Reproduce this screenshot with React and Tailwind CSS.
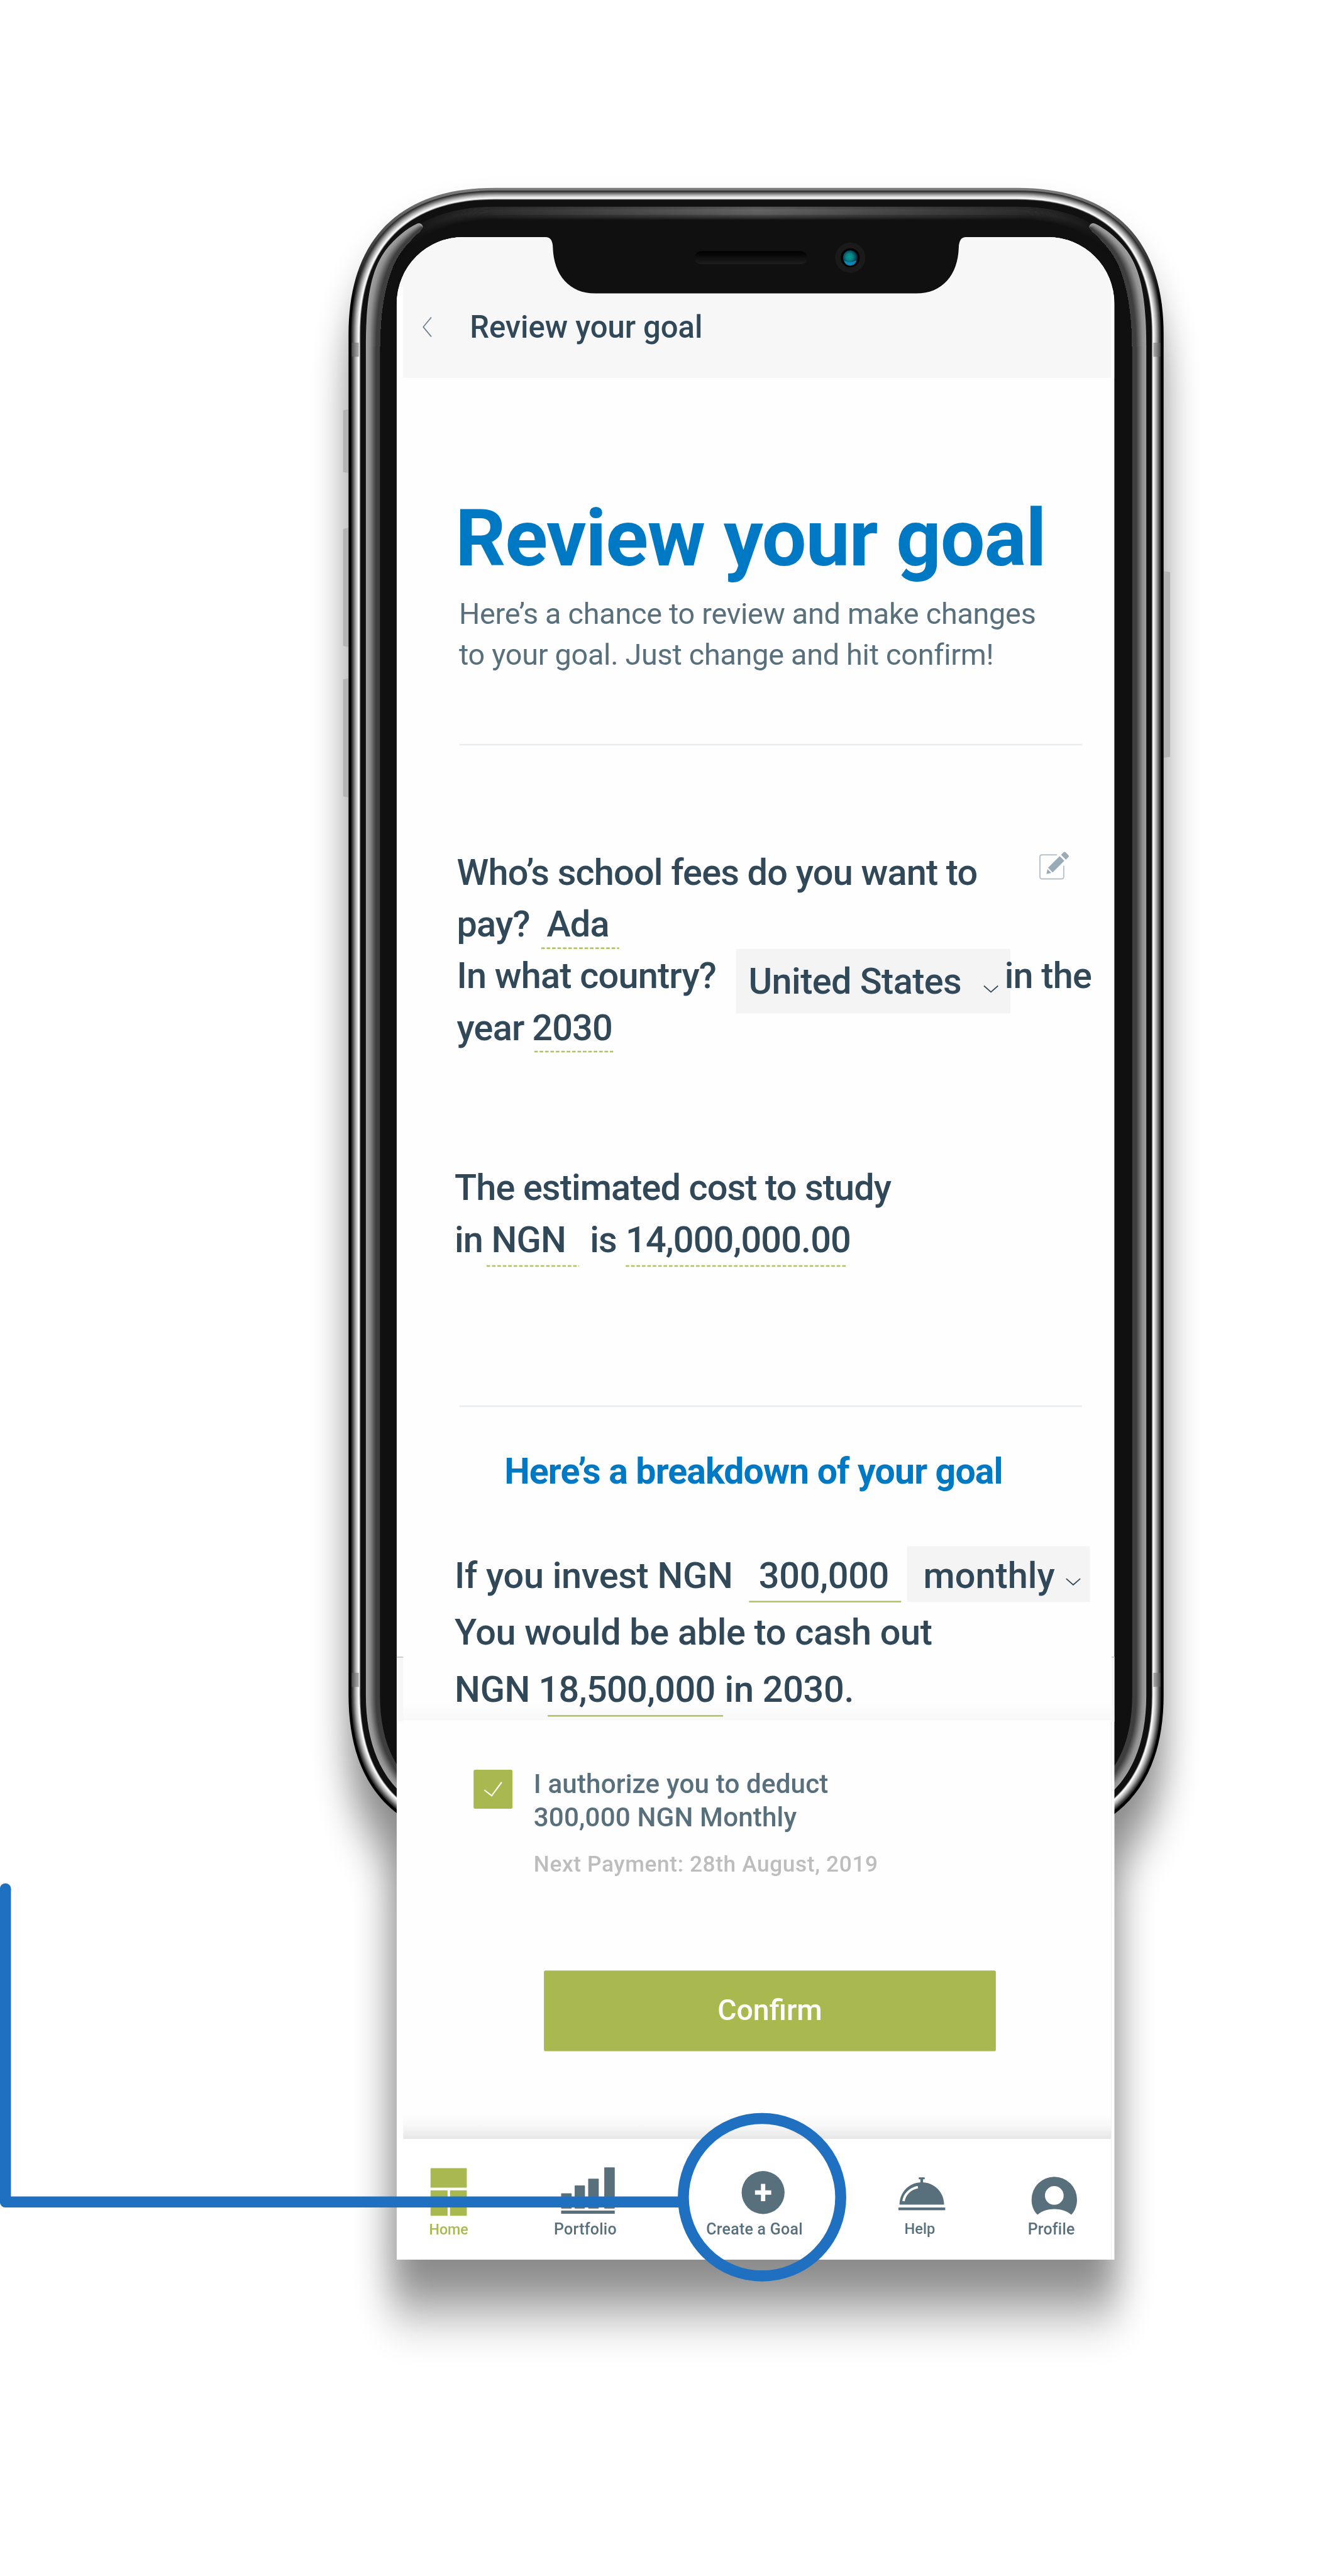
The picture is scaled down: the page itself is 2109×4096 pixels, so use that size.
import React from "react";

const BODY = { left: 644, right: 2150, top: 347, bottom: 3401, corner: 270 };

// Rounded rectangle with continuous corners, shrunk on every side by `inset`.
function bodyPath(inset) {
  const l = BODY.left + inset;
  const r = BODY.right - inset;
  const t = BODY.top + inset;
  const b = BODY.bottom - inset;
  const c = BODY.corner - inset;
  const k = c * 0.35;
  return `M${l + c} ${t}H${r - c}C${r - k} ${t} ${r} ${t + k} ${r} ${t + c}V${b - c}C${r} ${b - k} ${r - k} ${b} ${r - c} ${b}H${l + c}C${l + k} ${b} ${l} ${b - k} ${l} ${b - c}V${t + c}C${l} ${t + k} ${l + k} ${t} ${l + c} ${t}Z`;
}

const gray = (v) => `rgb(${v},${v},${v})`;

const METAL = [
  [5, 45], [6, 55], [7, 70], [8, 88], [9, 106], [10, 124], [11, 142], [12, 160], [13, 176],
  [14, 192], [15, 206], [16, 220], [17, 234], [18, 246], [19, 255], [20, 200], [21, 90], [22, 16],
];

const SIDE_GLOW = Array.from({ length: 26 }, (_, i) => {
  const t = i / 25;
  const v = t < 0.25 ? 160 - t * 60 : t < 0.72 ? 145 - ((t - 0.25) / 0.47) * 82 : 63;
  return [32 + i, Math.round(v)];
});

const TOP_GLOW = Array.from({ length: 24 }, (_, i) => {
  const t = i / 23;
  return [35 + i, t < 0.4 ? 0.8 + t * 0.5 : Math.max(0.1, 1 - ((t - 0.4) / 0.6) * 0.9)];
});

const GLOW_OUTER = [676, 640, 676, 555, 685, 500, 712, 463, 730, 439, 752, 422, 771, 413, 776, 411, 781, 414, 781, 420];
const GLOW_INNER = [702, 640, 702, 590, 708, 535, 726, 492, 738, 464, 756, 446, 776, 427, 778, 424, 781, 422, 781, 420];

function glowTip(t) {
  const p = GLOW_OUTER.map((v, i) => v + (GLOW_INNER[i] - v) * t);
  const q = GLOW_INNER;
  return `M${p[0]} ${p[1]}C${p.slice(2, 8).join(" ")}C${p.slice(8, 14).join(" ")}C${p.slice(14, 20).join(" ")}C${q[16]} ${q[17]} ${q[14]} ${q[15]} ${q[12]} ${q[13]}C${q[10]} ${q[11]} ${q[8]} ${q[9]} ${q[6]} ${q[7]}C${q[4]} ${q[5]} ${q[2]} ${q[3]} ${q[0]} ${q[1]}Z`;
}

function GlowTips() {
  return SIDE_GLOW.map(([inset, v], i) => (
    <path key={inset} d={glowTip(i / 25)} fill={gray(v)} />
  ));
}

function Device() {
  return (
    <svg className="absolute inset-0" width="2450" height="4758" viewBox="0 0 2450 4758">
      <defs>
        <filter id="shadow" x="-20%" y="-10%" width="140%" height="120%">
          <feGaussianBlur stdDeviation="34 52" />
        </filter>
        <linearGradient id="rim" gradientUnits="userSpaceOnUse" x1="0" y1="347" x2="0" y2="560">
          <stop offset="0" stopColor="#7c7c7c" />
          <stop offset="0.35" stopColor="#555" />
          <stop offset="1" stopColor="#000" />
        </linearGradient>
        <linearGradient id="sheen" gradientUnits="userSpaceOnUse" x1="740" y1="0" x2="2054" y2="0">
          <stop offset="0" stopColor="#101010" />
          <stop offset="0.08" stopColor="#2c2c2c" />
          <stop offset="0.5" stopColor="#7c7c7c" />
          <stop offset="0.92" stopColor="#2c2c2c" />
          <stop offset="1" stopColor="#101010" />
        </linearGradient>
        <linearGradient id="speaker" x1="0" y1="0" x2="0" y2="1">
          <stop offset="0" stopColor="#000" />
          <stop offset="1" stopColor="#1e1e1e" />
        </linearGradient>
        <radialGradient id="lens" cx="0.45" cy="0.45" r="0.55">
          <stop offset="0" stopColor="#0b9c8c" />
          <stop offset="0.45" stopColor="#0a7f85" />
          <stop offset="1" stopColor="#04203c" />
        </radialGradient>
        <clipPath id="topHalf"><rect x="700" y="347" width="1394" height="190" /></clipPath>
        <clipPath id="lowerBody"><rect x="600" y="639.5" width="1600" height="2900" /></clipPath>
      </defs>

      <g filter="url(#shadow)" opacity="0.47">
        <path d={bodyPath(0)} transform="translate(0 88)" />
        <rect x="722" y="700" width="1343" height="3562" />
      </g>

      <g fill="#b3b3b3">
        <path d="M644 756L634 758V872L644 874Z" />
        <path d="M644 975L634 977V1193L644 1195Z" />
        <path d="M644 1253L634 1255V1471L644 1473Z" />
        <path d="M2150 1055L2162 1057V1398L2150 1400Z" />
      </g>

      <path d={bodyPath(0)} fill="url(#rim)" />
      {METAL.map(([inset, v]) => (
        <path key={inset} d={bodyPath(inset)} fill={gray(v)} />
      ))}
      <g fill="#6b6b6b" fillOpacity="0.55">
        <rect x="650" y="633" width="13" height="26" />
        <rect x="2131" y="633" width="13" height="26" />
        <rect x="650" y="3090" width="13" height="26" />
        <rect x="2131" y="3090" width="13" height="26" />
      </g>

      <g clipPath="url(#topHalf)">
        {TOP_GLOW.map(([inset, o]) => (
          <g key={inset}>
            <path d={bodyPath(inset)} fill="#101010" />
            <path d={bodyPath(inset)} fill="url(#sheen)" fillOpacity={o} />
          </g>
        ))}
        <path d={bodyPath(59)} fill="#101010" />
      </g>
      <g clipPath="url(#lowerBody)">
        {SIDE_GLOW.map(([inset, v]) => (
          <path key={inset} d={bodyPath(inset)} fill={gray(v)} />
        ))}
        <path d={bodyPath(58)} fill="#101010" />
      </g>
      <GlowTips />
      <g transform="translate(2794 0) scale(-1 1)">
        <GlowTips />
      </g>
      <g fill="#101010">
        <rect x="703" y="630" width="36" height="20" />
        <rect x="2055" y="630" width="36" height="20" />
      </g>
    </svg>
  );
}

function Notch() {
  return (
    <svg className="absolute -top-px left-[262px]" width="802" height="106" viewBox="995 437 802 106">
      <path
        fill="#101010"
        d="M1003 436.500V438H1008Q1021 438 1021.500 457C1023 508 1052 542 1100 542H1693C1741 542 1770 508 1771.500 457Q1772 438 1785 438H1790V436.500Z"
      />
      <rect x="1283" y="464" width="209" height="24" rx="12" fill="url(#speaker)" />
      <circle cx="1571" cy="476" r="28" fill="#1a1a1a" />
      <circle cx="1571" cy="476" r="17.500" fill="#000" />
      <circle cx="1571" cy="476" r="13.500" fill="url(#lens)" />
      <path d="M1559.500 481Q1570.500 487 1582.500 481C1580.500 494 1561.500 494 1559.500 481Z" fill="#0a86b4" />
    </svg>
  );
}

function Chevron() {
  return (
    <svg className="block" width="28" height="14" viewBox="0 0 28 14" fill="none" stroke="#304857" strokeWidth="2">
      <path d="M1 1L14 12.500L27 1" />
    </svg>
  );
}

function Field({ className, children }) {
  return (
    <span
      className={`block shrink-0 bg-[linear-gradient(90deg,#b4c266_70%,transparent_70%)] bg-[length:10px_3px] bg-left-bottom bg-repeat-x ${className}`}
    >
      {children}
    </span>
  );
}

function NavItem({ label, className, labelClass, iconClass = "", children }) {
  return (
    <div className={`flex shrink-0 flex-col items-center ${className}`}>
      <svg className={`block ${iconClass}`} width="100" height="94" viewBox="0 0 100 94" fill="currentColor">
        {children}
      </svg>
      <span className={`mt-[5px] whitespace-nowrap font-medium leading-[36px] ${labelClass}`}>{label}</span>
    </div>
  );
}

function BottomNav() {
  return (
    <nav className="flex h-[223px] bg-white pt-[49px] text-[#586f7c]">
      <NavItem label="Home" className="w-[192px] text-[#aab94f]" labelClass="text-[27px] pt-[2px]">
        <rect x="16.500" y="5" width="67" height="36" rx="1" />
        <rect x="16.500" y="46" width="31.500" height="47" rx="1" />
        <rect x="52.500" y="46" width="31" height="47" rx="1" />
      </NavItem>
      <NavItem label="Portfolio" className="w-[313px]" labelClass="text-[29px] tracking-[0.3px]" iconClass="ml-[9px]">
        <rect x="0.800" y="51.500" width="19.500" height="28" rx="1" />
        <rect x="25.800" y="37" width="19" height="42.500" rx="1" />
        <rect x="50.800" y="24.500" width="19.500" height="55" rx="1" />
        <rect x="80.500" y="3.500" width="19.500" height="76" rx="1" />
        <rect x="0.800" y="83.300" width="99.200" height="6" />
      </NavItem>
      <NavItem label="Create a Goal" className="w-[312px]" labelClass="text-[29px] tracking-[0.3px]" iconClass="ml-[32px]">
        <circle cx="50" cy="50" r="39.700" />
        <path d="M46 34h8v12h11v8h-11v12h-8v-12h-11v-8h11z" fill="#fff" />
      </NavItem>
      <NavItem label="Help" className="w-[299px]" labelClass="text-[27.5px]" iconClass="ml-[6px]">
        <rect x="44.600" y="22" width="11" height="3.500" />
        <rect x="47.600" y="25" width="5" height="8" />
        <path d="M9 72.300C9 49 27 31 50 31S91.300 49 91.300 72.300Z" />
        <rect x="7" y="77.700" width="86.500" height="5" />
        <path d="M16.500 66C18 54 28 43 43 40" fill="none" stroke="#fff" strokeWidth="4.500" />
      </NavItem>
      <NavItem label="Profile" className="w-[187px]" labelClass="text-[29px] tracking-[0.2px]" iconClass="ml-[10px]">
        <path
          fillRule="evenodd"
          d="M19 91C11 83 8 73 8 63A42 42 0 0 1 92 63C92 73 89 83 81.500 91C65 77 35 77 19 91ZM50 38.200A17.300 17.300 0 1 0 50 72.800A17.300 17.300 0 1 0 50 38.200Z"
        />
      </NavItem>
    </nav>
  );
}

function Screen() {
  return (
    <section className="relative ml-[733px] h-[3736px] w-[1326px]">
      <div className="flex h-[3736px] w-[1326px] flex-col overflow-hidden rounded-t-[123px] bg-[#fefefe] text-[#304857]">
        <header className="h-[260px] shrink-0 bg-[linear-gradient(#f7f7f7_92px,white_92px)] pl-[12px] pr-[6px]">
          <div className="flex h-[260px] bg-[#f7f7f7] pl-[36px] pt-[137px]">
            <svg className="mt-[10px] block" width="17" height="38" viewBox="0 0 17 38" fill="none" stroke="#6d828f" strokeWidth="2">
              <path d="M16 1L1 19L16 37" />
            </svg>
            <span className="ml-[70px] text-[57px] font-medium leading-[60px] tracking-[-0.1px]">Review your goal</span>
          </div>
        </header>

        <h1 className="mt-[224px] whitespace-nowrap pl-[108px] text-[146px] font-bold leading-[146px] tracking-[-1.5px] text-[#0079c4]">
          Review your goal
        </h1>
        <p className="mt-[28px] whitespace-nowrap pl-[115px] text-[54.4px] leading-[76px] tracking-[-0.35px] text-[#586f7c]">
          Here’s a chance to review and make changes
          <br />
          to your goal. Just change and hit confirm!
        </p>
        <hr className="ml-[116px] mt-[126px] h-[3px] w-[1150px] shrink-0 border-0 bg-[#e8edf1]" />

        <div className="mt-[185px] pl-[111px] text-[67px] font-medium leading-[99px] tracking-[-0.95px]">
          <div className="flex h-[95.5px] whitespace-nowrap">
            <span className="w-[1076px]">Who’s school fees do you want to</span>
            <svg className="mt-[9px] block" width="58" height="56" viewBox="0 0 58 56">
              <path d="M33 8H5.500Q1.500 8 1.500 12V48Q1.500 52.500 5.500 52.500H41.500Q45.500 52.500 45.500 48V28" fill="none" stroke="#b4c3cc" strokeWidth="2.200" />
              <g fill="#98abb6">
                <path d="M38 10.500L46.500 19L25 40.500L16.500 32Z" />
                <path d="M40.500 8L45 3.500Q47 1.500 49 3.500L54 8.500Q56 10.500 54 12.500L49.500 17Z" />
                <path d="M15.500 34.500L22.500 41.500L13.500 43.500Z" />
              </g>
            </svg>
          </div>
          <div className="flex h-[95.5px] whitespace-nowrap">
            <span className="w-[156px]">pay?</span>
            <Field className="w-[144px] pl-[10px]">Ada</Field>
          </div>
          <div className="flex h-[95.5px] whitespace-nowrap">
            <span className="w-[516px] shrink-0">In what country?</span>
            <span className="flex h-[119px] w-[507px] shrink-0 bg-[#f4f4f4] pl-[23px] leading-[120px] tracking-[-0.7px]">
              <span className="w-[434px]">United States</span>
              <span className="pt-[67px]"><Chevron /></span>
            </span>
            <span className="-ml-[11px]">in the</span>
          </div>
          <div className="flex h-[95.5px] whitespace-nowrap">
            <span className="w-[143px]">year</span>
            <Field className="w-[146px] indent-[-4px]">2030</Field>
          </div>
        </div>

        <div className="mt-[201px] pl-[107px] text-[67px] font-medium leading-[99px] tracking-[-1.05px]">
          <div className="h-[95.5px] whitespace-nowrap">The estimated cost to study</div>
          <div className="flex h-[99px] whitespace-nowrap">
            <span className="w-[59px]">in</span>
            <Field className="w-[171px] pl-[9px]">NGN</Field>
            <span className="ml-[20px] w-[66px]">is</span>
            <Field className="w-[410px]">14,000,000.00</Field>
          </div>
        </div>
        <hr className="ml-[116px] mt-[256px] h-[3px] w-[1150px] shrink-0 border-0 bg-[#e8edf1]" />

        <h2 className="mt-[79px] whitespace-nowrap pl-[199px] text-[66.5px] font-bold leading-[80px] tracking-[-1.02px] text-[#0079c4]">
          Here’s a breakdown of your goal
        </h2>

        <div className="mt-[98px] h-[322px] shrink-0 bg-[linear-gradient(to_bottom,transparent_288px,#f8f8f8_322px)] pl-[107px] text-[67px] font-medium leading-[109.5px] tracking-[-0.4px]">
          <div className="flex h-[105.7px] whitespace-nowrap">
            <span className="w-[544px] shrink-0">If you invest NGN</span>
            <span className="h-[104px] w-[281px] shrink-0 border-b-[3px] border-[#b4c266] pl-[18px]">300,000</span>
            <span className="ml-[11px] flex h-[103px] w-[338px] shrink-0 bg-[#f4f4f4] pl-[30px] tracking-normal">
              <span className="w-[263px]">monthly</span>
              <span className="pt-[59px]"><Chevron /></span>
            </span>
          </div>
          <div className="h-[105.7px] whitespace-nowrap">You would be able to cash out</div>
          <div className="flex h-[105.7px] whitespace-nowrap">
            <span className="w-[172px]">NGN</span>
            <span className="h-[104px] w-[324px] border-b-[3px] border-[#b4c266] indent-[-17px] tracking-[-0.8px]">18,500,000</span>
            <span className="ml-[3px]">in 2030.</span>
          </div>
        </div>

        <div className="flex h-[773px] shrink-0 flex-col bg-[#fefefe]">
          <div className="flex pl-[142px] pt-[86px]">
            <span className="mt-[5px] flex h-[72px] w-[72px] items-center justify-center rounded-[3px] bg-[#aab94f]">
              <svg width="34" height="28" viewBox="0 0 34 28" fill="none" stroke="#fff" strokeWidth="2.500">
                <path d="M1 15.500L14.500 26L33 1" />
              </svg>
            </span>
            <div className="ml-[39px] whitespace-nowrap">
              <p className="mt-px text-[49px] font-medium leading-[62px] tracking-[0.15px] text-[#586f7c]">
                I authorize you to deduct
                <br />
                300,000 NGN Monthly
              </p>
              <p className="mt-[30px] text-[41px] font-medium leading-[48px] tracking-[0.7px] text-[#bdbdbd]">
                Next Payment: 28th August, 2019
              </p>
            </div>
          </div>
          <button className="ml-[272px] mt-[173px] h-[149px] w-[835px] shrink-0 rounded-[3px] bg-[#aab94f] pb-[3px] text-[54px] font-medium leading-[60px] text-white">
            Confirm
          </button>
          <div className="ml-[12px] mr-[6px] mt-auto h-[46px] bg-[linear-gradient(to_bottom,transparent,#f8f8f8_45%,#e6e6e6)]" />
        </div>
        <BottomNav />
      </div>
      <Notch />
      <span className="absolute left-0 top-[2622px] h-[120px] w-[12px] border-t-2 border-[#c8c8c8] bg-[#f7f7f7]" />
      <span className="absolute right-0 top-[2622px] h-[120px] w-[5px] border-t-2 border-[#c8c8c8] bg-[#f7f7f7]" />
      <span className="absolute right-[5px] top-[2742px] h-[994px] w-px bg-[#eeeeee]" />
    </section>
  );
}

function Callout() {
  return (
    <svg className="absolute inset-0" width="2450" height="4758" viewBox="0 0 2450 4758" fill="none" stroke="#2070c2" strokeWidth="20.400">
      <path d="M10 3489V4067.500H1255" strokeLinejoin="round" />
      <path d="M10 3489V3490" strokeLinecap="round" />
      <circle cx="1408" cy="4058.700" r="145.400" />
    </svg>
  );
}

export default function App() {
  return (
    <div className="h-[4096px] w-[2109px] overflow-hidden bg-white font-['Roboto',sans-serif]">
      <main className="relative h-[4758px] w-[2450px] origin-top-left scale-[0.8608] pt-[438px]">
        <Device />
        <Screen />
        <Callout />
      </main>
    </div>
  );
}
